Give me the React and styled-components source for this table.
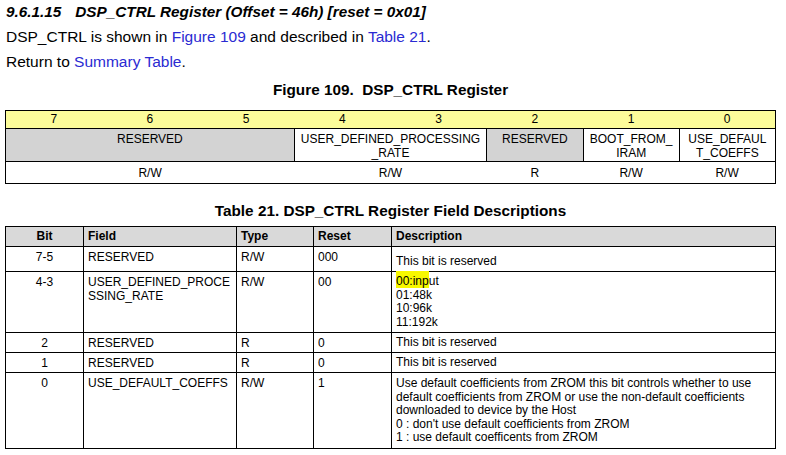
import styled, { createGlobalStyle } from 'styled-components';

const GlobalStyle = createGlobalStyle`
  body {
    margin: 0;
    background: #fff;
    color: #000;
    font-family: "Liberation Sans", Arial, sans-serif;
  }
`;

const Page = styled.div`
  width: 771px;
  padding: 0 10px 0 5px;
`;

const Heading = styled.h4`
  margin: 0;
  padding-left: 1px;
  font-size: 15.3px;
  font-style: italic;
  font-weight: bold;
  line-height: 24px;
`;

const SectionNo = styled.span`
  margin-right: 14px;
`;

const Para = styled.p`
  margin: 0;
  padding-left: 1px;
  font-size: 15.5px;
  line-height: 25px;
`;

const Link = styled.a`
  color: #2a2ad2;
  text-decoration: none;
`;

const Caption = styled.div`
  margin: ${p => p.$top}px 0 ${p => p.$bottom}px;
  text-align: center;
  font-size: 15.3px;
  font-weight: bold;
  line-height: 20px;
`;

const Table = styled.table`
  width: 771px;
  border-collapse: collapse;
  table-layout: fixed;
  border: 1px solid #000;
  font-size: 12px;
`;

const BitCell = styled.td`
  height: 17px;
  padding: 0;
  background: #fcfc9a;
  text-align: center;
  line-height: 17px;
  border-bottom: 1px solid #000;
`;

const FieldCell = styled.td`
  height: 29px;
  padding: 3px 2px 0;
  vertical-align: top;
  text-align: center;
  line-height: 14px;
  border: 1px solid #000;
  background: ${p => (p.$reserved ? '#d3d3d3' : '#fff')};
`;

const AccessCell = styled.td`
  height: 21px;
  padding: 0;
  text-align: center;
  line-height: 20px;
  vertical-align: middle;
`;

const HeadCell = styled.th`
  height: 19px;
  padding: 0 4px;
  background: #d9d9d9;
  border: 1px solid #000;
  font-weight: bold;
  text-align: ${p => (p.$center ? 'center' : 'left')};
  line-height: 19px;
`;

const Cell = styled.td`
  height: ${p => p.$h}px;
  padding: 0 4px;
  padding-top: ${p => p.$pt ?? 4}px;
  border: 1px solid #000;
  vertical-align: top;
  text-align: ${p => (p.$center ? 'center' : 'left')};
  line-height: 13.6px;
  box-sizing: border-box;
`;

const Mark = styled.span`
  background: #f8f800;
  padding-top: 3px;
`;

const bits = [7, 6, 5, 4, 3, 2, 1, 0];

const rows = [
  { bit: '7-5', field: 'RESERVED', type: 'R/W', reset: '000', h: 25, descTop: 8, desc: ['This bit is reserved'] },
  {
    bit: '4-3',
    field: ['USER_DEFINED_PROCE', 'SSING_RATE'],
    type: 'R/W',
    reset: '00',
    h: 61,
    descTop: 3,
    desc: [<><Mark>00:inp</Mark>ut</>, '01:48k', '10:96k', '11:192k'],
  },
  { bit: '2', field: 'RESERVED', type: 'R', reset: '0', h: 20, descTop: 3, desc: ['This bit is reserved'] },
  { bit: '1', field: 'RESERVED', type: 'R', reset: '0', h: 20, descTop: 3, desc: ['This bit is reserved'] },
  {
    bit: '0',
    field: 'USE_DEFAULT_COEFFS',
    type: 'R/W',
    reset: '1',
    h: 76,
    descTop: 4,
    desc: [
      'Use default coefficients from ZROM this bit controls whether to use',
      'default coefficients from ZROM or use the non-default coefficients',
      'downloaded to device by the Host',
      "0 : don't use default coefficients from ZROM",
      '1 : use default coefficents from ZROM',
    ],
  },
];

const lines = v =>
  (Array.isArray(v) ? v : [v]).map((l, i) => (
    <div key={i}>{l}</div>
  ));

export default function App() {
  return (
    <>
      <GlobalStyle />
      <Page>
        <Heading>
          <SectionNo>9.6.1.15</SectionNo>DSP_CTRL Register (Offset = 46h) [reset = 0x01]
        </Heading>
        <Para>
          DSP_CTRL is shown in <Link>Figure 109</Link> and described in <Link>Table 21</Link>.
        </Para>
        <Para>
          Return to <Link>Summary Table</Link>.
        </Para>

        <Caption $top={6} $bottom={10}>Figure 109.&nbsp; DSP_CTRL Register</Caption>
        <Table>
          <tbody>
            <tr>
              {bits.map(b => (
                <BitCell key={b}>{b}</BitCell>
              ))}
            </tr>
            <tr>
              <FieldCell colSpan={3} $reserved>RESERVED</FieldCell>
              <FieldCell colSpan={2}>
                USER_DEFINED_PROCESSING
                <br />_RATE
              </FieldCell>
              <FieldCell $reserved>RESERVED</FieldCell>
              <FieldCell>
                BOOT_FROM_
                <br />IRAM
              </FieldCell>
              <FieldCell>
                USE_DEFAUL
                <br />T_COEFFS
              </FieldCell>
            </tr>
            <tr>
              <AccessCell colSpan={3}>R/W</AccessCell>
              <AccessCell colSpan={2}>R/W</AccessCell>
              <AccessCell>R</AccessCell>
              <AccessCell>R/W</AccessCell>
              <AccessCell>R/W</AccessCell>
            </tr>
          </tbody>
        </Table>

        <Caption $top={17} $bottom={5}>Table 21. DSP_CTRL Register Field Descriptions</Caption>
        <Table>
          <colgroup>
            <col style={{ width: 78 }} />
            <col style={{ width: 153 }} />
            <col style={{ width: 77 }} />
            <col style={{ width: 78 }} />
            <col />
          </colgroup>
          <thead>
            <tr>
              <HeadCell $center>Bit</HeadCell>
              <HeadCell>Field</HeadCell>
              <HeadCell>Type</HeadCell>
              <HeadCell>Reset</HeadCell>
              <HeadCell>Description</HeadCell>
            </tr>
          </thead>
          <tbody>
            {rows.map(r => (
              <tr key={r.bit}>
                <Cell $h={r.h} $center>{r.bit}</Cell>
                <Cell $h={r.h}>{lines(r.field)}</Cell>
                <Cell $h={r.h}>{r.type}</Cell>
                <Cell $h={r.h}>{r.reset}</Cell>
                <Cell $h={r.h} $pt={r.descTop}>{lines(r.desc)}</Cell>
              </tr>
            ))}
          </tbody>
        </Table>
      </Page>
    </>
  );
}
